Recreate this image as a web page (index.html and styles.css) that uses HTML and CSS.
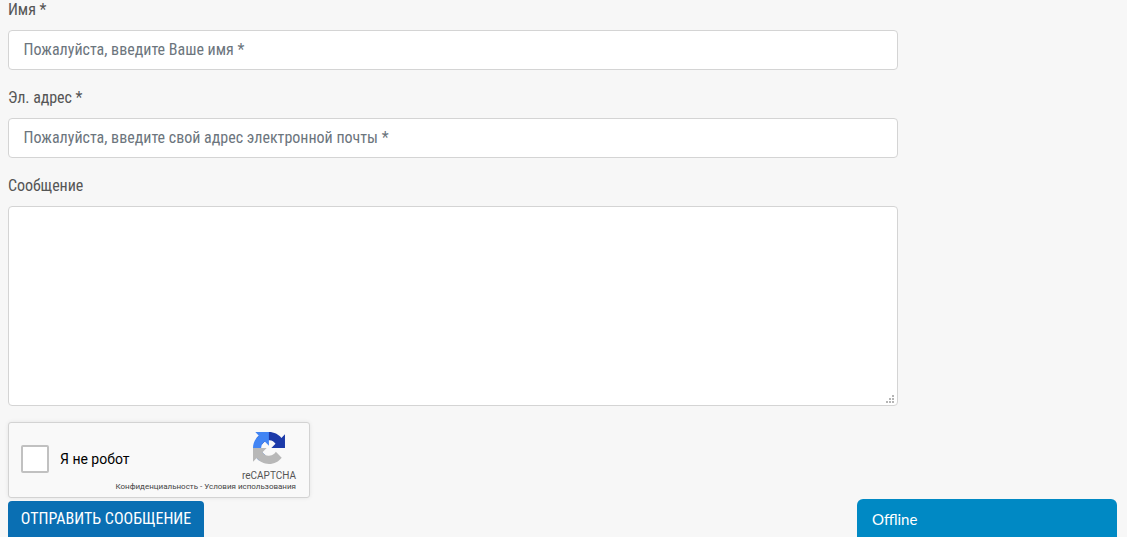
FILE: index.html
```html
<!DOCTYPE html>
<html lang="ru">
<head>
<meta charset="utf-8">
<title>Форма</title>
<link rel="stylesheet" href="styles.css">
</head>
<body>
<form class="form">
  <div class="group">
    <label class="label">Имя *</label>
    <input class="control" type="text" placeholder="Пожалуйста, введите Ваше имя *">
  </div>
  <div class="group">
    <label class="label">Эл. адрес *</label>
    <input class="control" type="text" placeholder="Пожалуйста, введите свой адрес электронной почты *">
  </div>
  <div class="group">
    <label class="label">Сообщение</label>
    <div class="area-wrap">
      <textarea class="control area"></textarea>
      <svg class="grip" width="9" height="9" viewBox="0 0 9 9">
        <rect x="6" y="0" width="2" height="2"/>
        <rect x="3" y="3" width="2" height="2"/>
        <rect x="6" y="3" width="2" height="2"/>
        <rect x="0" y="6" width="2" height="2"/>
        <rect x="3" y="6" width="2" height="2"/>
        <rect x="6" y="6" width="2" height="2"/>
      </svg>
    </div>
  </div>
  <div class="captcha">
    <span class="check"></span>
    <span class="robot">Я не робот</span>
    <div class="brand">
      <svg class="logo" width="32" height="32" viewBox="0 0 64 64">
        <path fill="#1c3aa9" d="M64 31.955l-.033-1.37V4.687l-7.16 7.16C50.948 4.674 42.033.093 32.05.093c-10.4 0-19.622 4.96-25.458 12.64l11.736 11.86a15.55 15.55 0 0 1 4.75-5.33c2.05-1.6 4.952-2.906 8.972-2.906.486 0 .86.057 1.136.163 4.98.393 9.294 3.14 11.838 7.125l-8.3 8.3c10.517-.04 22.397-.066 27.4.011"/>
        <path fill="#4285f4" d="M31.862.094l-1.37.033H4.594l7.16 7.16C4.58 13.147 0 22.06 0 32.045c0 10.4 4.96 19.622 12.64 25.458l11.86-11.736a15.55 15.55 0 0 1-5.33-4.75c-1.6-2.05-2.906-4.952-2.906-8.972 0-.486.057-.86.163-1.136.393-4.98 3.14-9.294 7.125-11.838l8.3 8.3c-.04-10.517-.066-22.397.011-27.4"/>
        <path fill="#b8b8b8" d="M.001 32.045l.033 1.37v25.898l7.16-7.16c5.86 7.173 14.774 11.754 24.76 11.754 10.4 0 19.622-4.96 25.458-12.64l-11.736-11.86a15.55 15.55 0 0 1-4.75 5.33c-2.05 1.6-4.952 2.906-8.972 2.906-.486 0-.86-.057-1.136-.163-4.98-.393-9.294-3.14-11.838-7.125l8.3-8.3c-10.517.04-22.397.066-27.4-.011"/>
      </svg>
      <span class="name">reCAPTCHA</span>
    </div>
    <span class="terms">Конфиденциальность - Условия использования</span>
  </div>
  <button class="submit" type="button">ОТПРАВИТЬ СООБЩЕНИЕ</button>
</form>
<div class="chat">Offline</div>
</body>
</html>
```
FILE: styles.css
```css
html, body {
  margin: 0;
  height: 537px;
  overflow: hidden;
  background: #f7f7f7;
}
body {
  padding: 0 8px;
  font-family: Roboto, "Liberation Sans", sans-serif;
  font-stretch: 75%;
}
.form {
  width: 890px;
  margin-top: -3px;
  display: flex;
  flex-direction: column;
  align-items: flex-start;
}
.group {
  width: 100%;
  margin-bottom: 15px;
}
.label {
  display: block;
  height: 24px;
  margin-bottom: 9px;
  font-size: 16px;
  line-height: 26px;
  letter-spacing: -0.05px;
  color: #555;
}
.control {
  display: block;
  box-sizing: border-box;
  width: 100%;
  height: 40px;
  padding: 0 14.5px 2px;
  border: 1px solid #d4d4d4;
  border-radius: 4px;
  background: #fff;
  font: inherit;
  font-size: 16px;
}
.control::placeholder {
  color: #6c757d;
  opacity: 1;
}
.area-wrap {
  position: relative;
}
.area {
  height: 200px;
  resize: none;
}
.grip {
  position: absolute;
  right: 3px;
  bottom: 2px;
  fill: #b5b5b5;
}
.captcha {
  position: relative;
  box-sizing: border-box;
  width: 302px;
  height: 76px;
  margin-top: 1px;
  display: flex;
  align-items: center;
  padding: 0 0 2px 12px;
  background: #f9f9f9;
  border: 1px solid #d3d3d3;
  border-radius: 3px;
  box-shadow: 0 0 4px rgba(0, 0, 0, 0.08);
  font-family: Roboto, sans-serif;
  font-stretch: 100%;
}
.check {
  box-sizing: border-box;
  width: 28px;
  height: 28px;
  background: #fff;
  border: 2px solid #c1c1c1;
  border-radius: 2px;
}
.robot {
  margin-left: 11px;
  font-size: 14px;
  color: #000;
}
.brand {
  position: absolute;
  right: 13px;
  top: 9px;
  display: flex;
  flex-direction: column;
  align-items: center;
}
.logo {
  display: block;
}
.name {
  margin-top: 6px;
  font-family: Roboto, sans-serif;
  font-size: 10px;
  line-height: 12px;
  color: #555;
}
.terms {
  position: absolute;
  right: 13px;
  bottom: 5px;
  font-size: 8px;
  line-height: 10px;
  color: #444;
  white-space: nowrap;
}
.submit {
  width: 196px;
  height: 40px;
  margin-top: 3px;
  padding: 0 0 6px;
  border: 0;
  border-radius: 4px;
  background: #0a6fb3;
  color: #fff;
  font: inherit;
  font-size: 16px;
}
.chat {
  position: fixed;
  left: 857px;
  top: 499px;
  box-sizing: border-box;
  width: 260px;
  height: 38px;
  padding: 11px 15px 0;
  background: #0089c4;
  border-radius: 6px 6px 0 0;
  color: #fff;
  font-family: Lato, sans-serif;
  font-size: 15px;
  font-stretch: 100%;
  line-height: 18px;
}
```
